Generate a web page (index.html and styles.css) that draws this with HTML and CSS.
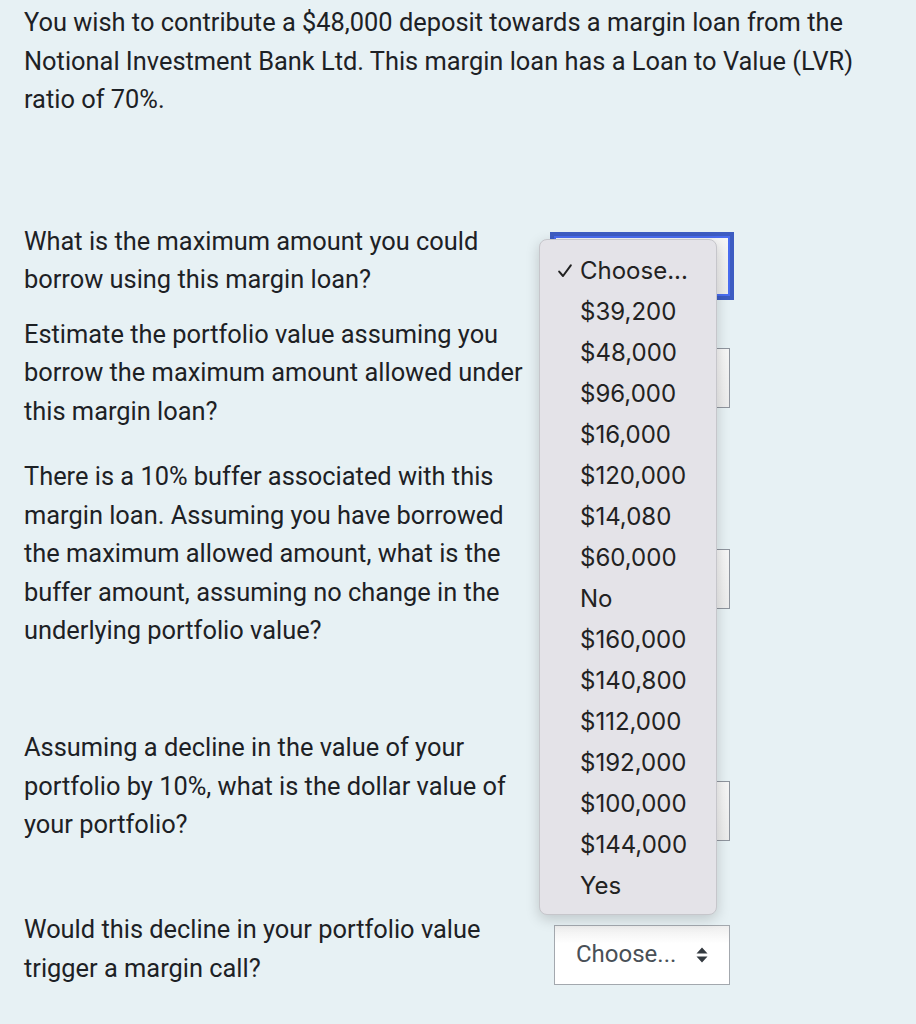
FILE: index.html
```html
<!DOCTYPE html>
<html lang="en">
<head>
  <meta charset="UTF-8" />
  <title>Margin loan question</title>
  <link rel="stylesheet" href="styles.css">
</head>
<body>

  <div class="question">
    <p class="intro">You wish to contribute a $48,000 deposit towards a margin loan from the Notional Investment Bank Ltd. This margin loan has a Loan to Value (LVR) ratio of 70%.</p>

    <div class="answers">
      <div class="row row-q1">
        <div class="text">What is the maximum amount you could borrow using this margin loan?</div>
        <div class="control">
          <div class="select focused"></div>
          <ul class="menu">
            <li class="checked">
              <svg class="check" width="14" height="14" viewBox="0 0 14 14"><path d="M1.2 7.6 L5 12 L12.8 1.4" fill="none" stroke="#222" stroke-width="2" stroke-linecap="round" stroke-linejoin="round"/></svg>
              Choose...
            </li>
            <li>$39,200</li>
            <li>$48,000</li>
            <li>$96,000</li>
            <li>$16,000</li>
            <li>$120,000</li>
            <li>$14,080</li>
            <li>$60,000</li>
            <li>No</li>
            <li>$160,000</li>
            <li>$140,800</li>
            <li>$112,000</li>
            <li>$192,000</li>
            <li>$100,000</li>
            <li>$144,000</li>
            <li>Yes</li>
          </ul>
        </div>
      </div>

      <div class="row row-q2">
        <div class="text">Estimate the portfolio value assuming you borrow the maximum amount allowed under this margin loan?</div>
        <div class="control"><div class="select"></div></div>
      </div>

      <div class="row row-q3">
        <div class="text">There is a 10% buffer associated with this margin loan. Assuming you have borrowed the maximum allowed amount, what is the buffer amount, assuming no change in the underlying portfolio value?<br><br></div>
        <div class="control"><div class="select"></div></div>
      </div>

      <div class="row row-q4">
        <div class="text">Assuming a decline in the value of your portfolio by 10%, what is the dollar value of your portfolio?<br><br></div>
        <div class="control"><div class="select"></div></div>
      </div>

      <div class="row row-q5">
        <div class="text">Would this decline in your portfolio value trigger a margin call?</div>
        <div class="control">
          <div class="select closed">
            <span>Choose...</span>
            <svg class="arrows" width="14" height="18" viewBox="0 0 14 18"><path d="M7 1.5 L12.5 7.5 H1.5 Z M7 16.5 L12.5 10.5 H1.5 Z" fill="#343a40"/></svg>
          </div>
        </div>
      </div>
    </div>
  </div>

</body>
</html>
```

FILE: styles.css
```css
* {
  box-sizing: border-box;
}

body {
  margin: 0;
  background: #e7f1f4;
  color: #1d2125;
  font-family: Roboto, "Liberation Sans", sans-serif;
  font-size: 25.4px;
  line-height: 38.5px;
}

.question {
  padding: 3px 24px 0;
}

.intro {
  margin: 0;
  width: 860px;
}

.answers {
  margin-top: 103px;
}

.row {
  display: flex;
  align-items: center;
  gap: 28px;
}

.text {
  width: 502px;
  padding-bottom: 12px;
}

.row-q2 { margin-top: 4px; }
.row-q3 { margin-top: 15px; }
.row-q4 { margin-top: 28px; }
.row-q5 { margin-top: 16px; }

.control {
  position: relative;
}

.select {
  width: 176px;
  height: 60px;
  border: 1.5px solid #8f959e;
  background: linear-gradient(#f6f6f6, #ececec);
}

.select.focused {
  border: 2px solid #4a6cf0;
  box-shadow: 0 0 0 4px #3d5cc2;
}

.select.closed {
  display: flex;
  align-items: center;
  justify-content: space-between;
  padding: 0 20px 0 21px;
  background: linear-gradient(#eeeeee, #ffffff 30%);
  color: #495057;
  border-color: #a3a8ae;
  font-size: 24px;
}

.arrows {
  display: block;
}

.menu {
  position: absolute;
  top: 3px;
  left: -15px;
  width: 178px;
  margin: 0;
  padding: 10px 0 8px;
  list-style: none;
  background: #e4e3e8;
  border: 1px solid #c6c6cb;
  border-radius: 8px;
  box-shadow: 0 4px 14px rgba(0, 0, 0, 0.18);
  font-family: Inter, "Liberation Sans", sans-serif;
  font-size: 24px;
  color: #222;
  z-index: 10;
}

.menu li {
  height: 41px;
  line-height: 41px;
  padding-left: 40px;
  position: relative;
}

.check {
  position: absolute;
  left: 18px;
  top: 14px;
}
```
